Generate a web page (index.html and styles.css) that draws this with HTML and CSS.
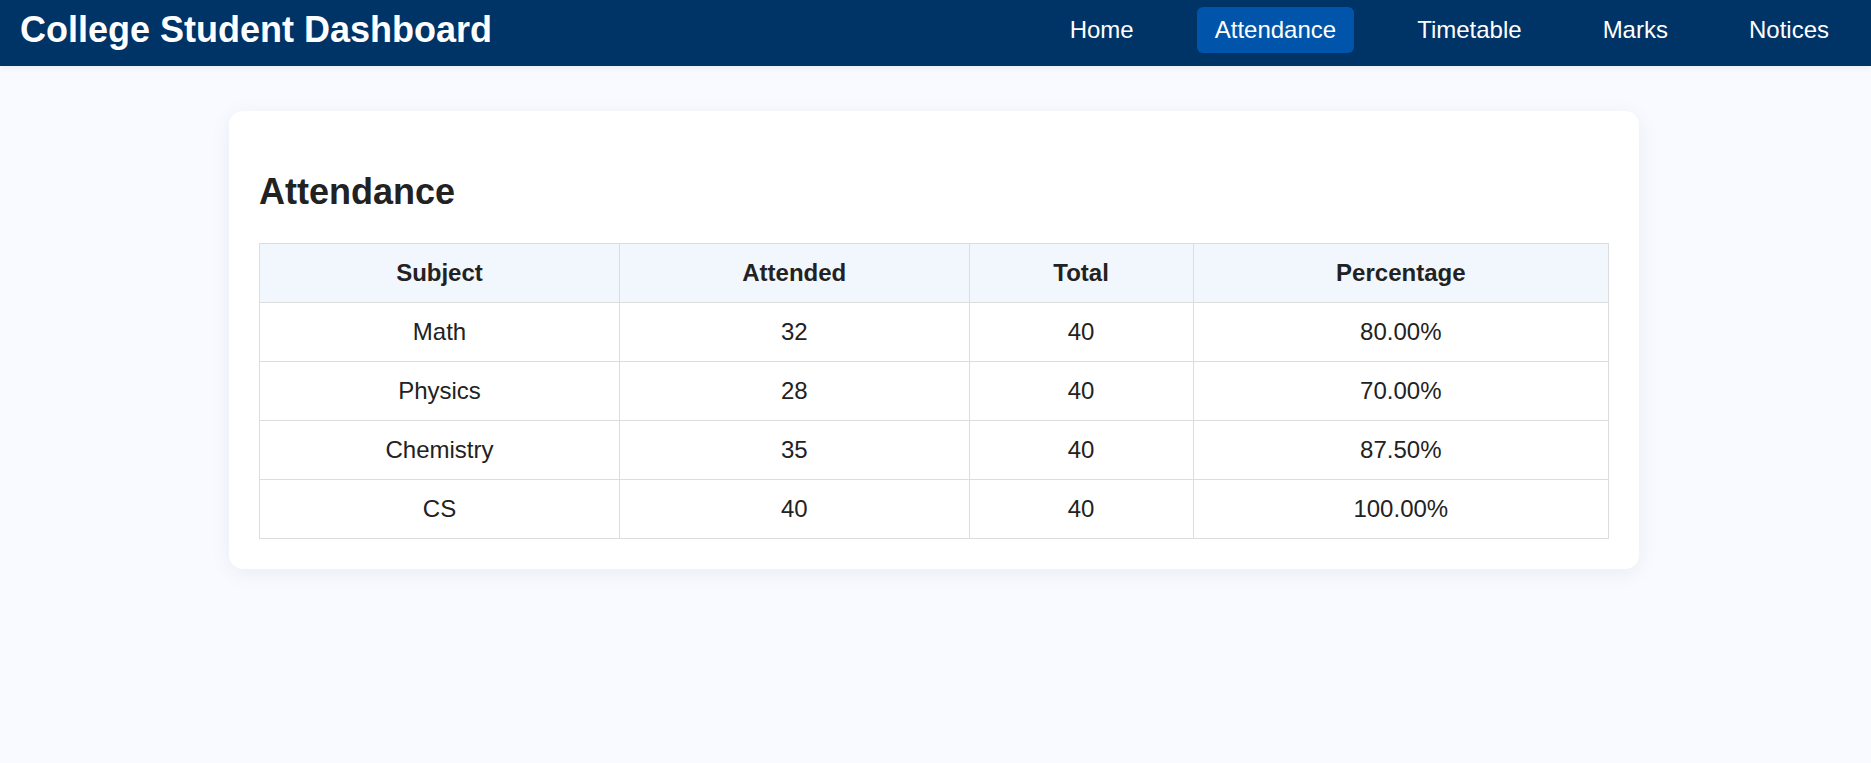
FILE: index.html
```html
<!DOCTYPE html>
<html lang="en">
<head>
<meta charset="utf-8">
<title>College Student Dashboard</title>
<link rel="stylesheet" href="styles.css">
</head>
<body>
<header class="topbar">
  <h1 class="brand">College Student Dashboard</h1>
  <nav class="nav">
    <a class="nav-link" href="#">Home</a>
    <a class="nav-link active" href="#">Attendance</a>
    <a class="nav-link" href="#">Timetable</a>
    <a class="nav-link" href="#">Marks</a>
    <a class="nav-link" href="#">Notices</a>
  </nav>
</header>
<main class="main">
  <section class="card">
    <h2 class="card-title">Attendance</h2>
    <table class="data-table">
      <thead>
        <tr><th>Subject</th><th>Attended</th><th>Total</th><th>Percentage</th></tr>
      </thead>
      <tbody>
        <tr><td>Math</td><td>32</td><td>40</td><td>80.00%</td></tr>
        <tr><td>Physics</td><td>28</td><td>40</td><td>70.00%</td></tr>
        <tr><td>Chemistry</td><td>35</td><td>40</td><td>87.50%</td></tr>
        <tr><td>CS</td><td>40</td><td>40</td><td>100.00%</td></tr>
      </tbody>
    </table>
  </section>
</main>
</body>
</html>
```
FILE: styles.css
```css
* { box-sizing: border-box; }
html, body { margin: 0; padding: 0; }
body {
  font-family: "Liberation Sans", Arial, sans-serif;
  background: #f8faff;
  color: #222;
  min-height: 100vh;
}
.topbar {
  display: flex;
  justify-content: space-between;
  align-items: center;
  background: #003366;
  color: #fff;
  padding: 7px 24px 13px 20px;
  box-shadow: 0 2px 6px rgba(0, 0, 0, 0.06);
}
.brand {
  margin: 0;
  font-size: 36px;
  font-weight: bold;
  line-height: normal;
}
.nav {
  display: flex;
  gap: 45px;
}
.nav-link {
  color: #fff;
  text-decoration: none;
  font-size: 24px;
  line-height: normal;
  padding: 9px 18px;
  border-radius: 6px;
}
.nav-link.active {
  background: #0055aa;
}
.main {
  padding: 45px 3px 0 0;
}
.card {
  max-width: 1410px;
  margin: 0 auto;
  background: #fff;
  border-radius: 14px;
  padding: 30px;
  box-shadow: 0 4px 22px rgba(0, 0, 0, 0.06);
}
.card-title {
  font-size: 36px;
  font-weight: bold;
  margin: 30px 0;
  line-height: normal;
  color: #222;
}
.data-table {
  width: 100%;
  border-collapse: collapse;
  font-size: 24px;
}
.data-table th,
.data-table td {
  border: 1px solid #dddddd;
  padding: 15px;
  text-align: center;
  line-height: normal;
}
.data-table th {
  background: #f2f7fd;
  font-weight: bold;
}
```
